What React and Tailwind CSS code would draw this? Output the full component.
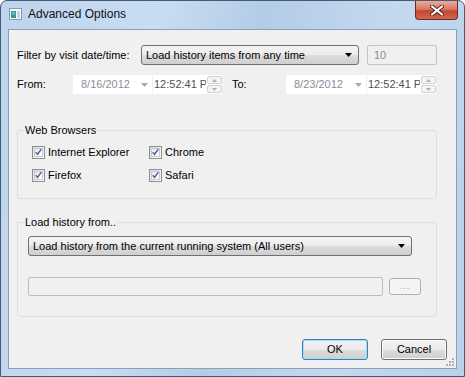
import React from "react";

const font = { fontFamily: '"Liberation Sans", Arial, sans-serif' };

const Arrow = ({ color = "#000" }) => (
  <svg width="7" height="4" viewBox="0 0 7 4">
    <path d="M0 0h7L3.5 4z" fill={color} />
  </svg>
);

const Combo = ({ className, children }) => (
  <div
    className={`h-[20px] flex items-center justify-between pl-[4px] pr-[6px] border border-[#707070] rounded-[3px] bg-[linear-gradient(#f4f4f4,#ececec_50%,#dddddd_50%,#cfcfcf)] text-[11px] text-black ${className}`}
  >
    <span className="leading-none">{children}</span>
    <Arrow />
  </div>
);

const Spinner = () => (
  <div className="absolute right-0 top-0 bottom-0 w-[16px] bg-white flex flex-col gap-[1px] py-[1px] pl-[1px]">
    <div className="flex-1 flex items-center justify-center border border-[#d2d2d2] rounded-[2px] bg-[#f4f4f4]">
      <svg width="5" height="3" viewBox="0 0 5 3">
        <path d="M0 3h5L2.5 0z" fill="#b0b0b0" />
      </svg>
    </div>
    <div className="flex-1 flex items-center justify-center border border-[#d2d2d2] rounded-[2px] bg-[#f4f4f4]">
      <svg width="5" height="3" viewBox="0 0 5 3">
        <path d="M0 0h5L2.5 3z" fill="#b0b0b0" />
      </svg>
    </div>
  </div>
);

const DateTime = ({ date, dateW, timeW }) => (
  <div className="flex h-full">
    <div className={`${dateW} h-full bg-white flex items-center justify-between pl-[8px] pr-[4px] text-[11px] text-[#8a8d9a]`}>
      <span>{date}</span>
      <Arrow color="#a9a9a9" />
    </div>
    <div className={`${timeW} relative h-full bg-white flex items-center ml-[1px] pl-[1px] text-[11px] text-[#505050]`}>
      <span className="whitespace-nowrap">12:52:41 PM</span>
      <Spinner />
    </div>
  </div>
);

const Check = ({ label, className = "" }) => (
  <div className={`flex items-center h-[16px] ${className}`}>
    <div className="w-[13px] h-[13px] border border-[#8e8f8f] bg-[linear-gradient(135deg,#dcdcdc,#ffffff)] p-[1px]">
      <div className="w-full h-full border border-[#c7c9cc] bg-[linear-gradient(135deg,#e7e9ec,#ffffff)] flex items-center justify-center">
        <svg width="8" height="8" viewBox="0 0 8 8">
          <path d="M0.8 4.2L3 6.6L7.2 0.8" fill="none" stroke="#4b62a0" strokeWidth="1.6" />
        </svg>
      </div>
    </div>
    <span className="ml-[3px] text-[11px] text-black">{label}</span>
  </div>
);

const Button = ({ children, focused }) => (
  <div
    className={`w-[66px] h-[21px] rounded-[3px] border flex items-center justify-center text-[11px] text-black bg-[linear-gradient(#f2f2f2,#ebebeb_50%,#dddddd_50%,#cfcfcf)] ${
      focused ? "border-[#3c7fb1] shadow-[inset_0_0_0_1px_#a8dcf5]" : "border-[#707070] shadow-[inset_0_0_0_1px_#fbfbfb]"
    }`}
  >
    {children}
  </div>
);

export default function App() {
  return (
    <div className="w-[465px] h-[377px] bg-white" style={font}>
      <div className="w-[465px] h-[377px] flex flex-col rounded-t-[7px] border border-[#4a5a6c] bg-[linear-gradient(100deg,#bcd4ee,#c9ddf2_30%,#b3cce8_50%,#c4d9f0_75%,#b9d1ec)] overflow-hidden">
        {/* title bar */}
        <div className="h-[28px] flex items-start">
          <svg className="mt-[7px] ml-[8px]" width="13" height="12" viewBox="0 0 13 12">
            <rect x="0.5" y="0.5" width="12" height="11" fill="#f7f9fb" stroke="#8c99a6" />
            <rect x="2" y="3" width="5" height="7" fill="#3d9a7a" />
            <rect x="3" y="4" width="3" height="3" fill="#5fb5e6" />
            <rect x="8" y="3" width="3" height="7" fill="#c9d6e2" />
          </svg>
          <span className="ml-[6px] mt-[6px] text-[12px] leading-[15px] text-[#111]">Advanced Options</span>
          <div className="ml-auto mr-[6px] w-[43px] h-[19px] rounded-b-[4px] border border-t-0 border-[#6a2c22] bg-[linear-gradient(#e9aa9a,#d77b66_45%,#c4452f_55%,#cf6a52)] flex items-center justify-center">
            <svg width="14" height="11" viewBox="0 0 14 11">
              <path d="M2 1.5L12 9.5M12 1.5L2 9.5" stroke="#5a2218" strokeWidth="4" strokeLinecap="round" />
              <path d="M2 1.5L12 9.5M12 1.5L2 9.5" stroke="#ffffff" strokeWidth="2.2" strokeLinecap="round" />
            </svg>
          </div>
        </div>

        {/* client area */}
        <div className="relative flex-1 mx-[7px] mb-[7px] border border-[#8c9fb5] bg-[#f0f0f0] flex flex-col pl-[8px]">
          <div className="flex items-center h-[20px] mt-[15px]">
            <span className="w-[124px] text-[11px] text-black">Filter by visit date/time:</span>
            <Combo className="w-[218px]">Load history items from any time</Combo>
            <div className="ml-[8px] w-[70px] h-[20px] border border-[#c4c4c4] rounded-[2px] bg-[#f0f0f0] flex items-center pl-[6px] text-[11px] text-[#8a8a8a]">
              10
            </div>
          </div>

          <div className="flex items-center h-[19px] mt-[10px]">
            <span className="w-[56px] text-[11px] text-black">From:</span>
            <DateTime date="8/16/2012" dateW="w-[79px]" timeW="w-[69px]" />
            <span className="ml-[10px] w-[54px] text-[11px] text-black">To:</span>
            <DateTime date="8/23/2012" dateW="w-[80px]" timeW="w-[69px]" />
          </div>

          <fieldset className="mt-[29px] w-[420px] border border-[#d5dfe5] rounded-[3px]">
            <legend className="ml-[6px] px-[1px] text-[11px] leading-[14px] text-black">Web Browsers</legend>
            <div className="pl-[14px] pb-[15px]">
              <div className="flex mt-[7px]">
                <Check label="Internet Explorer" className="w-[117px]" />
                <Check label="Chrome" />
              </div>
              <div className="flex mt-[7px]">
                <Check label="Firefox" className="w-[117px]" />
                <Check label="Safari" />
              </div>
            </div>
          </fieldset>

          <fieldset className="mt-[16px] w-[420px] border border-[#d5dfe5] rounded-[3px]">
            <legend className="ml-[6px] px-[1px] text-[11px] leading-[14px] text-black">Load history from..</legend>
            <div className="pl-[10px] pb-[20px]">
              <Combo className="w-[384px] mt-[7px]">Load history from the current running system (All users)</Combo>
              <div className="flex items-center mt-[21px]">
                <div className="w-[355px] h-[19px] border border-[#bdbdbd] rounded-[2px] bg-[#f0f0f0]" />
                <div className="ml-[6px] w-[32px] h-[17px] border border-[#adb2b5] rounded-[3px] bg-[#f4f4f4] flex items-center justify-center text-[9px] text-[#9a9a9a] tracking-[1px]">
                  ...
                </div>
              </div>
            </div>
          </fieldset>

          <div className="flex justify-end gap-[13px] pr-[9px] mt-[22px]">
            <Button focused>OK</Button>
            <Button>Cancel</Button>
          </div>

          <svg className="absolute right-[1px] bottom-[1px]" width="11" height="11" viewBox="0 0 11 11">
            <g fill="#a8b2bd">
              <rect x="8" y="2" width="2" height="2" />
              <rect x="5" y="5" width="2" height="2" />
              <rect x="8" y="5" width="2" height="2" />
              <rect x="2" y="8" width="2" height="2" />
              <rect x="5" y="8" width="2" height="2" />
              <rect x="8" y="8" width="2" height="2" />
            </g>
          </svg>
        </div>
      </div>
    </div>
  );
}
